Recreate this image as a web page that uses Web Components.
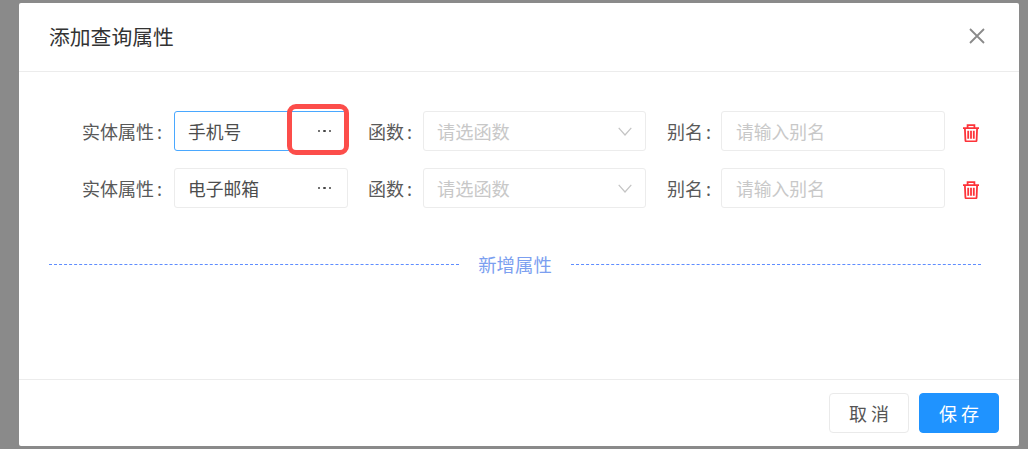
<!DOCTYPE html>
<html lang="zh-CN"><head><meta charset="utf-8"><style>
html,body{margin:0;height:100%;overflow:hidden}
body{background:#8a8a8a;font-family:"Noto Sans CJK SC","Noto Sans",sans-serif;color:#595959}
</style></head><body>
<query-dialog heading="添加查询属性">
  <attr-row value="手机号" focused marked></attr-row>
  <attr-row value="电子邮箱"></attr-row>
  <add-divider>新增属性</add-divider>
</query-dialog>
<script>
class QueryDialog extends HTMLElement{constructor(){super();const s=this.attachShadow({mode:'open'});s.innerHTML=`<style>
:host{display:block;height:449px;box-sizing:border-box;padding:3px 9px 3px 19px}
.box{height:443px;background:#fff;border-radius:2px;display:flex;flex-direction:column}
header{height:69px;box-sizing:border-box;border-bottom:1px solid #ececec;display:flex;align-items:center;justify-content:space-between;padding:0 33px 2px 30px;flex:none}
h2{margin:0;font:400 20.8px/28px "Noto Sans CJK SC",sans-serif;color:#333}
main{flex:1;padding:39px 38px 0 30px}
footer{height:67px;box-sizing:border-box;border-top:1px solid #ececec;display:flex;justify-content:flex-end;align-items:flex-start;gap:10px;padding:13px 20px 0 0;flex:none}
button{width:80px;height:40px;box-sizing:border-box;border-radius:4px;font:400 18px/1 "Noto Sans CJK SC",sans-serif;letter-spacing:4px;text-indent:4px;padding:0}
.c{background:#fff;border:1px solid #eaeaea;color:#555}
.o{background:#1f93ff;border:1px solid #1f93ff;color:#fff}
svg{display:block}
</style><div class="box"><header><h2></h2><svg width="18" height="18" viewBox="0 0 18 18"><path d="M2 2 16 16M16 2 2 16" stroke="#8a8a8a" stroke-width="1.8" fill="none"/></svg></header><main><slot></slot></main><footer><button class="c">取消</button><button class="o">保存</button></footer></div>`;s.querySelector('h2').textContent=this.getAttribute('heading');}}
class AttrRow extends HTMLElement{constructor(){super();const s=this.attachShadow({mode:'open'});const v=this.getAttribute('value');const f=this.hasAttribute('focused');const m=this.hasAttribute('marked');s.innerHTML=`<style>
:host{display:flex;align-items:center;height:40px;margin-bottom:17px;font:400 17.8px/40px "Noto Sans CJK SC",sans-serif;color:#595959}
.l{white-space:nowrap;box-sizing:border-box;display:flex;justify-content:flex-end;flex:none;font-size:18px}
.l b{font-weight:400;margin-left:3px}
.l1{width:125px;padding-right:12px}.l2{width:75px;padding-right:11px}.l3{width:75px;padding-right:10px}
.f{position:relative;box-sizing:border-box;height:40px;border:1px solid #ececec;border-radius:3px;background:#fff;display:flex;align-items:center;justify-content:space-between;padding:0 15px 0 14px;flex:none}
.f.on{border-color:#4aa8ff}
.v{color:#4d4d4d}.ph{color:#c8c8c8}
.a{width:174px;padding:0 16px 0 13px}.b{width:223px;padding:0 13px 0 13px;font-size:18.2px}.d{width:224px}
.dots{display:flex;gap:3px}.dots i{width:2.4px;height:2.4px;border-radius:50%;background:#444}
.mark{position:absolute;left:112px;top:-8px;width:62px;height:51px;box-sizing:border-box;border:5px solid #fc4d4a;border-radius:9px}
.t{margin:4px 0 0 18px;flex:none}
</style>
<span class="l l1">实体属性<b>:</b></span>
<div class="f a ${f?'on':''}"><span class="v">${v}</span><span class="dots"><i></i><i></i><i></i></span>${m?'<div class="mark"></div>':''}</div>
<span class="l l2">函数<b>:</b></span>
<div class="f b"><span class="ph">请选函数</span><svg width="14" height="9" viewBox="0 0 14 9"><path d="M.7.8 7 8 13.3.8" stroke="#c4c4c4" stroke-width="1.2" fill="none"/></svg></div>
<span class="l l3">别名<b>:</b></span>
<div class="f d"><span class="ph">请输入别名</span></div>
<svg class="t" width="16" height="18" viewBox="0 0 16 18" fill="none" stroke="#fd3339" stroke-width="1.8"><path d="M0 4.1h16M4.6 4V1.1h6.8V4M1.9 4.2l.5 12c0 .7.4 1.1 1.1 1.1h9c.7 0 1.1-.4 1.1-1.1l.5-12"/><path d="M5.2 6.8v8M8 6.8v8M10.8 6.8v8" stroke-width="1.8"/></svg>`;}}
class AddDivider extends HTMLElement{constructor(){super();this.attachShadow({mode:'open'}).innerHTML=`<style>
:host{display:flex;align-items:center;margin-top:36px;gap:19px;font:400 18.4px/40px "Noto Sans CJK SC",sans-serif;color:#7c9ff0}
.line{flex:1;height:0;border-top:1px dashed #5f8dff}
</style><div class="line"></div><span><slot></slot></span><div class="line"></div>`;}}
customElements.define('query-dialog',QueryDialog);customElements.define('attr-row',AttrRow);customElements.define('add-divider',AddDivider);
</script></body></html>
